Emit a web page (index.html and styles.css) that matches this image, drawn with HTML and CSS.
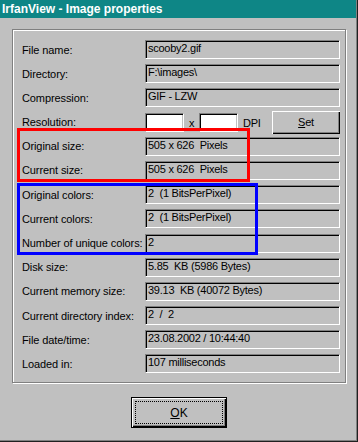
FILE: index.html
```html
<!DOCTYPE html>
<html>
<head>
<meta charset="utf-8">
<title>IrfanView - Image properties</title>
<link rel="stylesheet" href="styles.css">
</head>
<body>
<div class="window">
  <div class="titlebar">IrfanView - Image properties</div>
  <div class="group">
    <div class="rows">
      <div class="row"><span class="label">File name:</span><span class="field">scooby2.gif</span></div>
      <div class="row"><span class="label">Directory:</span><span class="field">F:\images\</span></div>
      <div class="row"><span class="label">Compression:</span><span class="field">GIF - LZW</span></div>
      <div class="row"><span class="label">Resolution:</span>
        <span class="res">
          <span class="input"></span><span class="times">x</span><span class="input"></span><span class="dpi">DPI</span>
          <span class="btn set"><u>S</u>et</span>
        </span>
      </div>
      <div class="row"><span class="label">Original size:</span><span class="field">505 x 626  Pixels</span></div>
      <div class="row"><span class="label">Current size:</span><span class="field">505 x 626  Pixels</span></div>
      <div class="row"><span class="label">Original colors:</span><span class="field">2  (1 BitsPerPixel)</span></div>
      <div class="row"><span class="label">Current colors:</span><span class="field">2  (1 BitsPerPixel)</span></div>
      <div class="row"><span class="label">Number of unique colors:</span><span class="field">2</span></div>
      <div class="row"><span class="label">Disk size:</span><span class="field">5.85  KB (5986 Bytes)</span></div>
      <div class="row"><span class="label">Current memory size:</span><span class="field">39.13  KB (40072 Bytes)</span></div>
      <div class="row"><span class="label">Current directory index:</span><span class="field">2  /  2</span></div>
      <div class="row"><span class="label">File date/time:</span><span class="field">23.08.2002 / 10:44:40</span></div>
      <div class="row"><span class="label">Loaded in:</span><span class="field">107 milliseconds</span></div>
    </div>
    <div class="mark mark-red"></div>
    <div class="mark mark-blue"></div>
  </div>
  <div class="footer">
    <span class="btn ok"><span class="focus"><u>O</u>K</span></span>
  </div>
</div>
</body>
</html>
```
FILE: styles.css
```css
* { box-sizing: border-box; }
html, body {
  margin: 0;
  padding: 0;
  background: #c0c0c0;
}
body {
  font-family: "Liberation Sans", Arial, sans-serif;
  font-size: 11px;
  letter-spacing: -0.25px;
  color: #000;
}
.window {
  width: 358px;
  height: 442px;
  background: #c0c0c0;
  box-shadow: inset -1px -1px 0 #202020, inset -2px -2px 0 #808080;
  overflow: hidden;
}
.titlebar {
  width: 356px;
  height: 18px;
  line-height: 18px;
  background: #0e8686;
  color: #fff;
  font-weight: bold;
  font-size: 12px;
  letter-spacing: 0;
  padding-left: 2px;
  white-space: nowrap;
}
.group {
  position: relative;
  margin: 11px 0 0 12px;
  width: 334px;
  height: 354px;
  border: 1px solid #808080;
  box-shadow: inset 1px 1px 0 #fff, 1px 1px 0 #fff;
}
.rows {
  display: grid;
  grid-auto-rows: 19px;
  row-gap: 5.2px;
  padding: 10px 0 0 9px;
}
.row {
  display: grid;
  grid-template-columns: 123px 195px;
  align-items: center;
}
.label {
  white-space: nowrap;
  letter-spacing: -0.1px;
}
.field {
  height: 19px;
  line-height: 15px;
  border: 1px solid;
  border-color: #808080 #fff #fff #808080;
  box-shadow: inset 1px 1px 0 #000;
  padding-left: 2px;
  white-space: pre;
  overflow: hidden;
}
.res {
  display: flex;
  align-items: center;
  height: 19px;
}
.input {
  width: 39px;
  height: 19px;
  background: #fff;
  border: 1px solid;
  border-color: #808080 #fff #fff #808080;
  box-shadow: inset 1px 1px 0 #000, inset -1px -1px 0 #c0c0c0;
}
.times {
  width: 15px;
  text-align: center;
  padding-top: 2px;
}
.dpi {
  margin-left: 5px;
  padding-top: 1px;
}
.btn {
  display: flex;
  align-items: center;
  justify-content: center;
  background: #c0c0c0;
}
.set {
  margin-left: auto;
  width: 68px;
  height: 23px;
  flex: none;
  box-shadow: inset 1px 1px 0 #fff, inset -1px -1px 0 #000, inset -2px -2px 0 #808080;
}
.mark {
  position: absolute;
  border: 3px solid;
}
.mark-red {
  border-color: #f00;
  left: 4px;
  top: 98px;
  width: 233px;
  height: 54px;
}
.mark-blue {
  border-color: #00f;
  left: 4px;
  top: 153px;
  width: 241px;
  height: 72px;
}
.footer {
  display: flex;
  justify-content: center;
  margin-top: 14px;
}
.ok {
  width: 96px;
  height: 31px;
  border: 1px solid #000;
  box-shadow: inset 1px 1px 0 #fff, inset -1px -1px 0 #000, inset -2px -2px 0 #808080;
  padding: 3px;
}
.focus {
  flex: 1;
  align-self: stretch;
  display: flex;
  align-items: center;
  justify-content: center;
  border: 1px dotted #000;
  font-size: 12px;
  letter-spacing: 0;
}
```
